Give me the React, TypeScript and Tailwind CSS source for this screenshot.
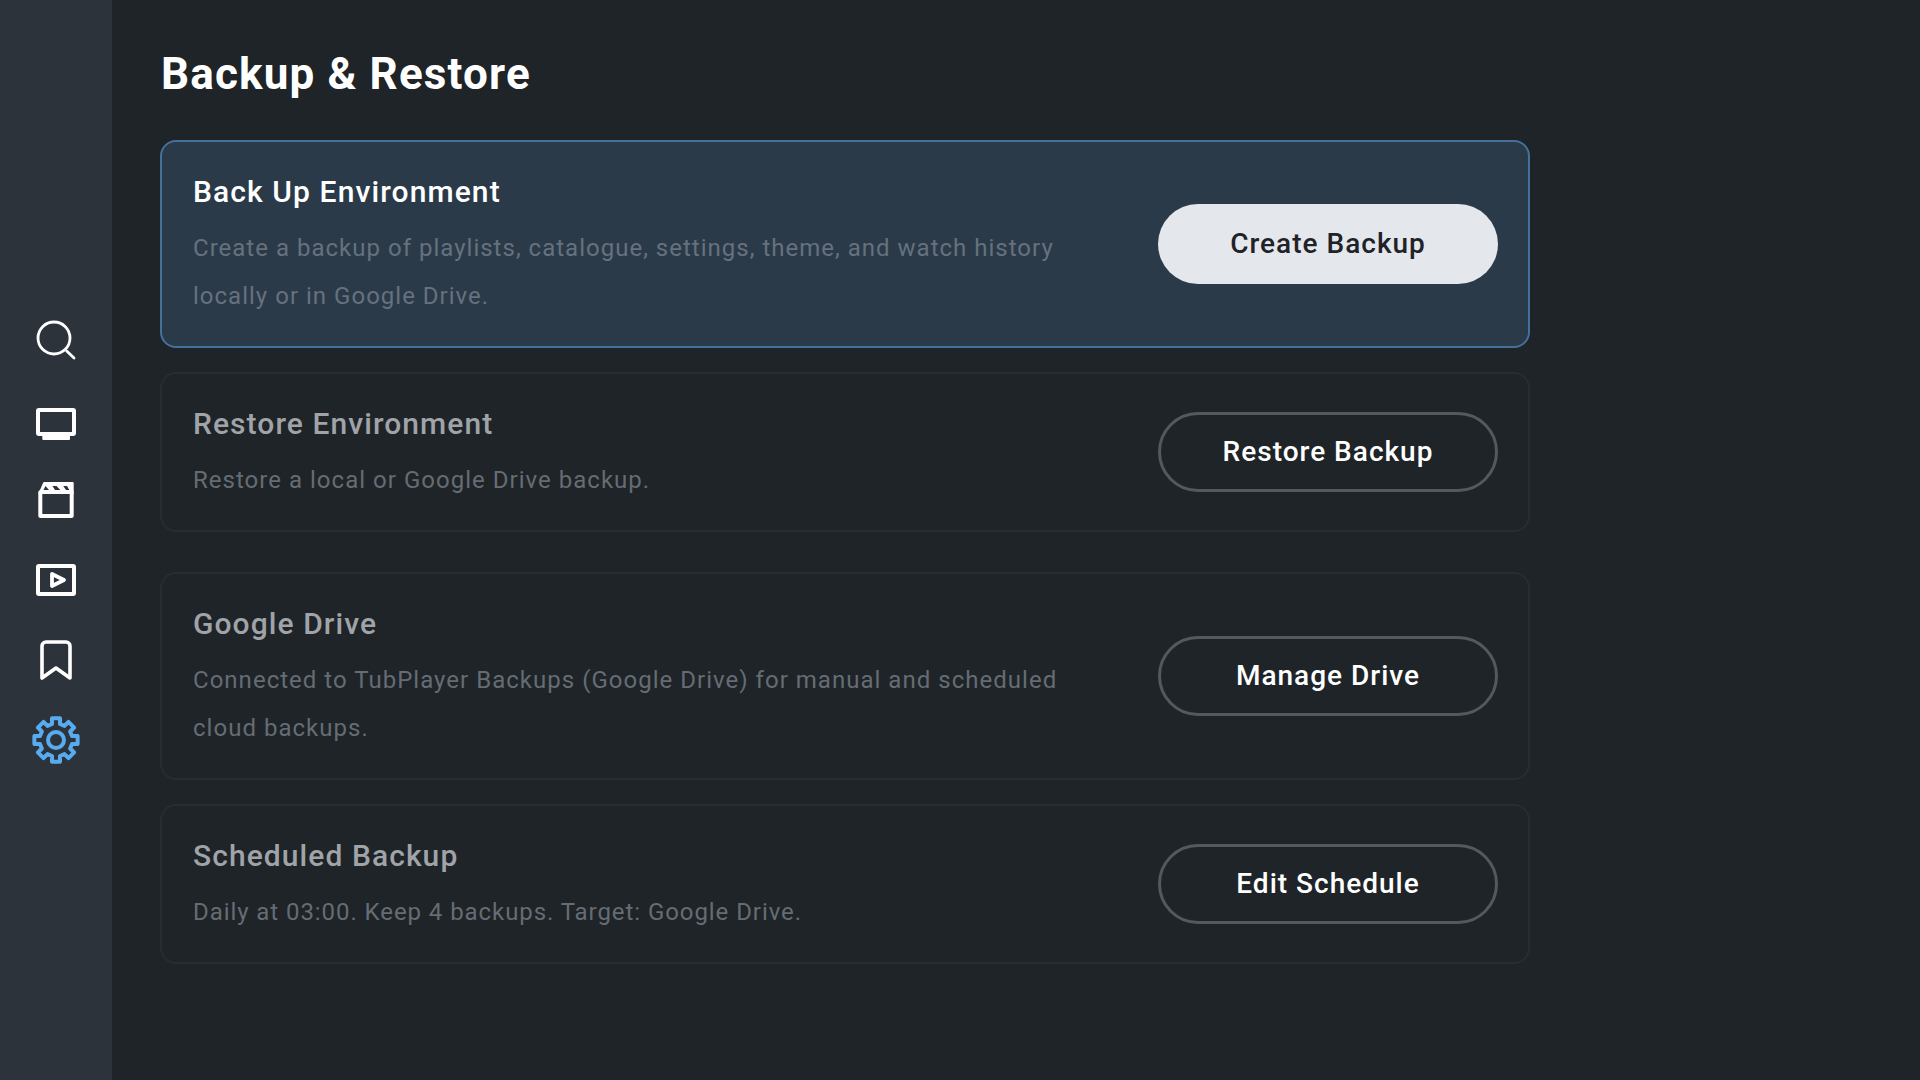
import React from "react";

function gearPath() {
  const cx = 28;
  const cy = 28;
  const pts: string[] = [];
  for (let i = 0; i < 8; i++) {
    const a = (i * 45 * Math.PI) / 180 - Math.PI / 2;
    const p = (r: number, d: number) => {
      const t = a + (d * Math.PI) / 180;
      return `${(cx + r * Math.cos(t)).toFixed(2)} ${(cy + r * Math.sin(t)).toFixed(2)}`;
    };
    pts.push(p(16.5, -14), p(22, -10.5), p(22, 10.5), p(16.5, 14));
  }
  return `M${pts.join("L")}Z`;
}

function Card({ title, desc, btn, active, tight }: { title: string; desc: string; btn: string; active?: boolean; tight?: boolean }) {
  return (
    <div className={active ? "flex items-center justify-between w-[1370px] rounded-[16px] border-2 border-[#44709a] bg-[#2b3a49] pl-[31px] pr-[30px] pt-[30px] pb-[26px]" : "flex items-center justify-between w-[1370px] rounded-[16px] border-2 border-[#282d32] pl-[31px] pr-[30px] pt-[30px] pb-[26px]"}>
      <div className="w-[900px]">
        <div className={active ? "text-[30px] leading-[40px] font-medium tracking-[1.1px] text-white" : "text-[30px] leading-[40px] font-medium tracking-[1.07px] text-[#a0a3a7]"}>{title}</div>
        <div className={active ? "mt-[12px] text-[24px] leading-[48px] tracking-[1.01px] text-[#66717e]" : tight ? "mt-[12px] text-[24px] leading-[48px] tracking-[0.93px] text-[#666c73]" : "mt-[12px] text-[24px] leading-[48px] tracking-[1.02px] text-[#666c73]"}>{desc}</div>
      </div>
      <button className={active ? "w-[340px] h-[80px] -mt-[4px] rounded-full bg-[#e4e7ec] text-[#1f2328] text-[28px] font-medium tracking-[1px]" : "w-[340px] h-[80px] -mt-[4px] rounded-full border-[3px] border-[#55585c] text-white text-[28px] font-medium tracking-[1px]"}>{btn}</button>
    </div>
  );
}

export default function App() {
  return (
    <div className="flex w-[1920px] h-[1080px] overflow-hidden bg-[#1e2428] font-['Roboto',sans-serif]">
      <div className="w-[112px] h-full bg-[#2c333b] flex flex-col items-center pt-[312px]">
        <svg width="56" height="56" viewBox="0 0 56 56" fill="none" stroke="#fff" strokeWidth="2.8" strokeLinecap="round"><circle cx="26" cy="26" r="16" /><path d="M38.7 39 L46 46" /></svg>
        <svg className="mt-[28px]" width="56" height="56" viewBox="0 0 56 56" fill="none"><rect x="10" y="14" width="36" height="24" rx="1" stroke="#fff" strokeWidth="4" /><rect x="14.3" y="38" width="27.7" height="6" rx="1" fill="#fff" /></svg>
        <svg className="mt-[20px]" width="56" height="56" viewBox="0 0 56 56" fill="none"><rect x="12.3" y="20" width="31.4" height="24" rx="0.5" stroke="#fff" strokeWidth="4" /><path d="M10.3 22 L15 11 Q15.4 10 16.5 10 H44.7 Q45.7 10 45.7 11 V22 Z" fill="#fff" /><path d="M17.5 14 L15.5 18 H21 Z M24.5 14 H28.5 L32.3 18 H27 Z M35.3 14 H39 L41.3 18 H38 Z" fill="#2c333b" /></svg>
        <svg className="mt-[24px]" width="56" height="56" viewBox="0 0 56 56" fill="none" stroke="#fff" strokeLinejoin="round"><rect x="10" y="14" width="36" height="28" rx="1" strokeWidth="4" /><path d="M24 22 L36 28 L24 34 Z" strokeWidth="3.8" /></svg>
        <svg className="mt-[24px]" width="56" height="56" viewBox="0 0 56 56" fill="none" stroke="#fff" strokeWidth="3.6" strokeLinejoin="round"><path d="M14 46V14a4 4 0 0 1 4-4h20a4 4 0 0 1 4 4v32L28 36Z" /></svg>
        <svg className="mt-[24px]" width="56" height="56" viewBox="0 0 56 56" fill="none" stroke="#58abee" strokeWidth="4" strokeLinejoin="round"><path d={gearPath()} /><circle cx="28" cy="28" r="8" /></svg>
      </div>
      <div className="flex-1 pl-[48px] pt-[48px]">
        <h1 className="pl-[1px] text-[44px] leading-[52px] font-bold tracking-[1.15px] text-white">Backup &amp; Restore</h1>
        <div className="mt-[40px] flex flex-col gap-[24px]">
          <Card active title="Back Up Environment" desc="Create a backup of playlists, catalogue, settings, theme, and watch history locally or in Google Drive." btn="Create Backup" />
          <Card title="Restore Environment" desc="Restore a local or Google Drive backup." btn="Restore Backup" />
          <div className="mt-[16px]"><Card title="Google Drive" desc="Connected to TubPlayer Backups (Google Drive) for manual and scheduled cloud backups." btn="Manage Drive" /></div>
          <Card tight title="Scheduled Backup" desc="Daily at 03:00. Keep 4 backups. Target: Google Drive." btn="Edit Schedule" />
        </div>
      </div>
    </div>
  );
}
